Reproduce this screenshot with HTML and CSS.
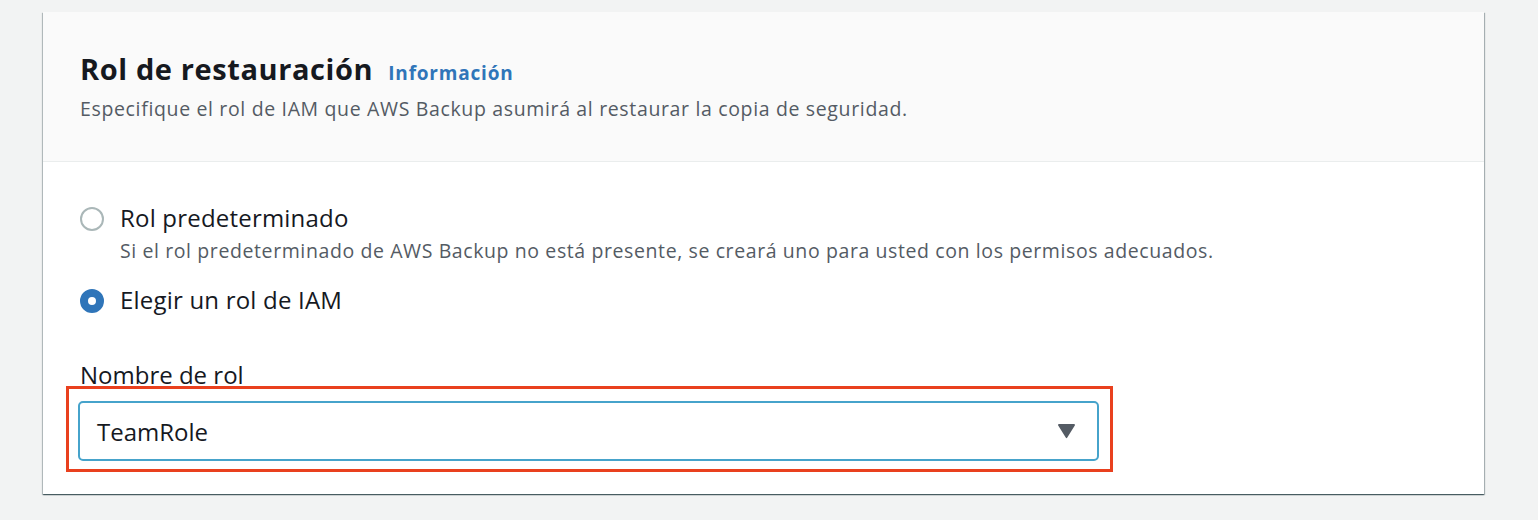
FILE: index.html
```html
<!DOCTYPE html>
<html lang="es">
<head>
<meta charset="utf-8">
<title>Rol de restauración</title>
<link rel="stylesheet" href="styles.css">
</head>
<body>
<div class="card">
  <div class="card-header">
    <div class="title-row">
      <h2 class="title">Rol de restauración</h2>
      <a class="info-link" href="#">Información</a>
    </div>
    <p class="subtitle">Especifique el rol de IAM que AWS Backup asumirá al restaurar la copia de seguridad.</p>
  </div>
  <div class="card-body">
    <div class="radio-group">
      <div class="radio-item">
        <span class="radio"></span>
        <div class="radio-text">
          <div class="radio-label">Rol predeterminado</div>
          <div class="radio-desc">Si el rol predeterminado de AWS Backup no está presente, se creará uno para usted con los permisos adecuados.</div>
        </div>
      </div>
      <div class="radio-item">
        <span class="radio radio-checked"></span>
        <div class="radio-text">
          <div class="radio-label">Elegir un rol de IAM</div>
        </div>
      </div>
    </div>
    <div class="field">
      <div class="field-label">Nombre de rol</div>
      <div class="select-wrap">
        <div class="select">
          <span class="select-value">TeamRole</span>
          <svg class="caret" width="19" height="16" viewBox="0 0 19 16" aria-hidden="true">
            <path d="M2 1 H17 a1 1 0 0 1 0.8 1.6 L10.3 14.6 a1 1 0 0 1 -1.6 0 L1.2 2.6 A1 1 0 0 1 2 1 Z" fill="#545b64"/>
          </svg>
        </div>
        <div class="highlight"></div>
      </div>
    </div>
  </div>
</div>
</body>
</html>
```

FILE: styles.css
```css
html, body {
  margin: 0;
  padding: 0;
}
body {
  background: #f2f3f3;
  font-family: "Open Sans", "Noto Sans", sans-serif;
  color: #16191f;
  padding: 12px 0 0 43px;
  height: 520px;
  box-sizing: border-box;
}
.card {
  width: 1441px;
  background: #ffffff;
  box-shadow: 0 1px 1px 0 rgba(0, 28, 36, 0.5), 1px 1px 1px 0 rgba(0, 28, 36, 0.25), -1px 1px 1px 0 rgba(0, 28, 36, 0.2);
}
.card-header {
  background: #fafafa;
  border-bottom: 1px solid #eaeded;
  height: 150px;
  box-sizing: border-box;
  padding: 39px 36px 0 37px;
}
.title-row {
  display: flex;
  align-items: baseline;
  gap: 15px;
}
.title {
  margin: 0;
  font-size: 29px;
  line-height: 36px;
  font-weight: 700;
  letter-spacing: 0.6px;
  color: #16191f;
}
.info-link {
  font-size: 19px;
  font-weight: 700;
  letter-spacing: 0.8px;
  color: #2f75b9;
  text-decoration: none;
}
.subtitle {
  margin: 9px 0 0;
  font-size: 19.5px;
  line-height: 26px;
  letter-spacing: 0.65px;
  color: #545b64;
}
.card-body {
  padding: 40px 36px 33px 37px;
}
.radio-group {
  display: flex;
  flex-direction: column;
  gap: 20px;
}
.radio-item {
  display: flex;
  gap: 16px;
  align-items: flex-start;
}
.radio {
  flex: none;
  width: 24px;
  height: 24px;
  box-sizing: border-box;
  border: 2px solid #aab7b8;
  border-radius: 50%;
  background: #ffffff;
  margin-top: 5px;
}
.radio-checked {
  border: 8px solid #2f75b9;
}
.radio-label {
  font-size: 24px;
  line-height: 32px;
  letter-spacing: 0.2px;
  color: #16191f;
}
.radio-desc {
  font-size: 19.5px;
  line-height: 26px;
  letter-spacing: 0.6px;
  color: #545b64;
  margin-top: 4px;
}
.field {
  margin-top: 43px;
}
.field-label {
  font-size: 24px;
  line-height: 32px;
  color: #16191f;
  margin-bottom: 10px;
}
.select-wrap {
  position: relative;
  width: 1021px;
  margin-left: -2px;
}
.select {
  height: 60px;
  box-sizing: border-box;
  border: 2px solid #46a3cb;
  border-radius: 5px;
  background: #ffffff;
  display: flex;
  align-items: center;
  justify-content: space-between;
  padding: 0 21px 0 17px;
}
.select-value {
  font-size: 24px;
  color: #16191f;
}
.caret {
  display: block;
}
.highlight {
  position: absolute;
  top: -15px;
  left: -12px;
  right: -14px;
  bottom: -11px;
  border: 3px solid #e9401e;
  pointer-events: none;
}
```
